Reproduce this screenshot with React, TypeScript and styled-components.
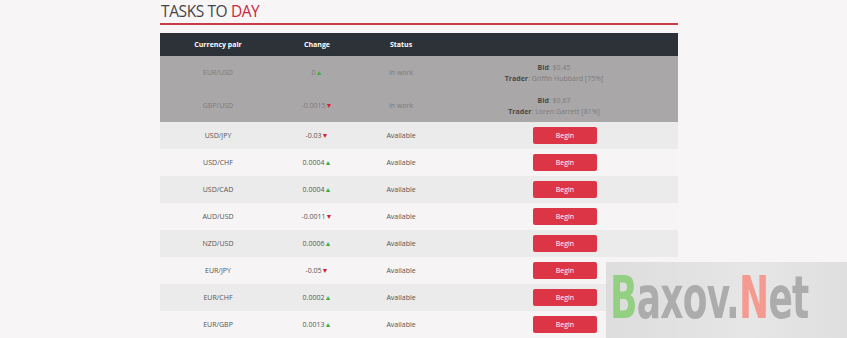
import styled, { createGlobalStyle } from "styled-components";

const GlobalStyle = createGlobalStyle`
  html, body {
    margin: 0;
    padding: 0;
    background: #f7f5f5;
  }
  body {
    font-family: "Open Sans", "Liberation Sans", sans-serif;
    overflow: hidden;
  }
`;

interface Task {
  pair: string;
  change: string;
  up: boolean;
  status: string;
  bid?: string;
  trader?: string;
}

const tasks: Task[] = [
  { pair: "EUR/USD", change: "0", up: true, status: "In work", bid: "$0.45", trader: "Griffin Hubbard [75%]" },
  { pair: "GBP/USD", change: "-0.0015", up: false, status: "In work", bid: "$0.67", trader: "Loren Garrett [81%]" },
  { pair: "USD/JPY", change: "-0.03", up: false, status: "Available" },
  { pair: "USD/CHF", change: "0.0004", up: true, status: "Available" },
  { pair: "USD/CAD", change: "0.0004", up: true, status: "Available" },
  { pair: "AUD/USD", change: "-0.0011", up: false, status: "Available" },
  { pair: "NZD/USD", change: "0.0006", up: true, status: "Available" },
  { pair: "EUR/JPY", change: "-0.05", up: false, status: "Available" },
  { pair: "EUR/CHF", change: "0.0002", up: true, status: "Available" },
  { pair: "EUR/GBP", change: "0.0013", up: true, status: "Available" },
];

function App() {
  return (
    <Page>
      <GlobalStyle />
      <Section>
        <Title>
          TASKS TO <span>DAY</span>
        </Title>
        <Table>
          <HeadRow>
            <div>Currency pair</div>
            <div>Change</div>
            <div>Status</div>
            <div />
          </HeadRow>
          {tasks.map((t, i) => {
            const busy = !!t.bid;
            return (
              <Row key={t.pair} busy={busy} odd={i % 2 === 0}>
                <div>{t.pair}</div>
                <div>
                  {t.change}
                  <Arrow up={t.up}>{t.up ? "▲" : "▼"}</Arrow>
                </div>
                <div>{t.status}</div>
                {busy ? (
                  <BidCell>
                    <div>
                      <b>Bid</b>: {t.bid}
                    </div>
                    <div>
                      <b>Trader</b>: {t.trader}
                    </div>
                  </BidCell>
                ) : (
                  <ButtonCell>
                    <BeginButton>Begin</BeginButton>
                  </ButtonCell>
                )}
              </Row>
            );
          })}
        </Table>
      </Section>
      <Watermark>
        <WatermarkText>
          <Green>B</Green>axov.<Salmon>N</Salmon>et
        </WatermarkText>
      </Watermark>
    </Page>
  );
}

export default App;

const Page = styled.div`
  position: relative;
  width: 847px;
  height: 338px;
  overflow: hidden;
`;

const Section = styled.div`
  width: 518px;
  margin-left: 160px;
  padding-top: 1px;
`;

const Title = styled.h2`
  margin: 0;
  padding: 0 0 2px 1px;
  font-size: 15.5px;
  line-height: 20px;
  font-weight: 500;
  color: #454547;
  letter-spacing: -0.4px;
  border-bottom: 2px solid #c93a4c;
  span {
    color: #c8283c;
  }
`;

const Table = styled.div`
  margin-top: 8px;
  font-size: 7px;
`;

const columns = "116px 82px 86px 1fr";

const HeadRow = styled.div`
  display: grid;
  grid-template-columns: ${columns};
  height: 23px;
  align-items: center;
  text-align: center;
  background: #2d3238;
  color: #ffffff;
  font-weight: 700;
`;

const Row = styled.div<{ busy: boolean; odd: boolean }>`
  display: grid;
  grid-template-columns: ${columns};
  align-items: center;
  text-align: center;
  height: ${({ busy }) => (busy ? "33px" : "27px")};
  background: ${({ busy, odd }) => (busy ? "#a9a7a8" : odd ? "#ecebeb" : "#f6f4f4")};
  color: ${({ busy }) => (busy ? "#7c7b7c" : "#555555")};
`;

const Arrow = styled.span<{ up: boolean }>`
  color: ${({ up }) => (up ? "#3cb043" : "#d41f2d")};
  font-size: 7px;
`;

const BidCell = styled.div`
  line-height: 11px;
  padding-right: 14px;
  b {
    color: #4a494a;
    font-weight: 700;
  }
`;

const ButtonCell = styled.div`
  display: flex;
  justify-content: center;
  padding-left: 8px;
`;

const BeginButton = styled.div`
  width: 64px;
  height: 17px;
  line-height: 17px;
  border-radius: 2px;
  background: #dc3545;
  color: #ffffff;
  text-align: center;
  font-size: 7px;
`;

const Watermark = styled.div`
  position: absolute;
  left: 606px;
  top: 262px;
  width: 241px;
  height: 76px;
  background: linear-gradient(90deg, #dcdcdc, #e6e6e6 60%, #dedede);
  opacity: 0.95;
`;

const WatermarkText = styled.div`
  position: absolute;
  left: 4px;
  top: 6px;
  font-family: "DejaVu Sans Condensed", "DejaVu Sans", sans-serif;
  font-weight: 700;
  font-size: 52px;
  line-height: 60px;
  color: #a9a9a9;
  transform: scale(0.77, 1.12);
  transform-origin: left center;
  letter-spacing: -1px;
`;

const Green = styled.span`
  color: #8fcf7d;
`;

const Salmon = styled.span`
  color: #f4968c;
`;
